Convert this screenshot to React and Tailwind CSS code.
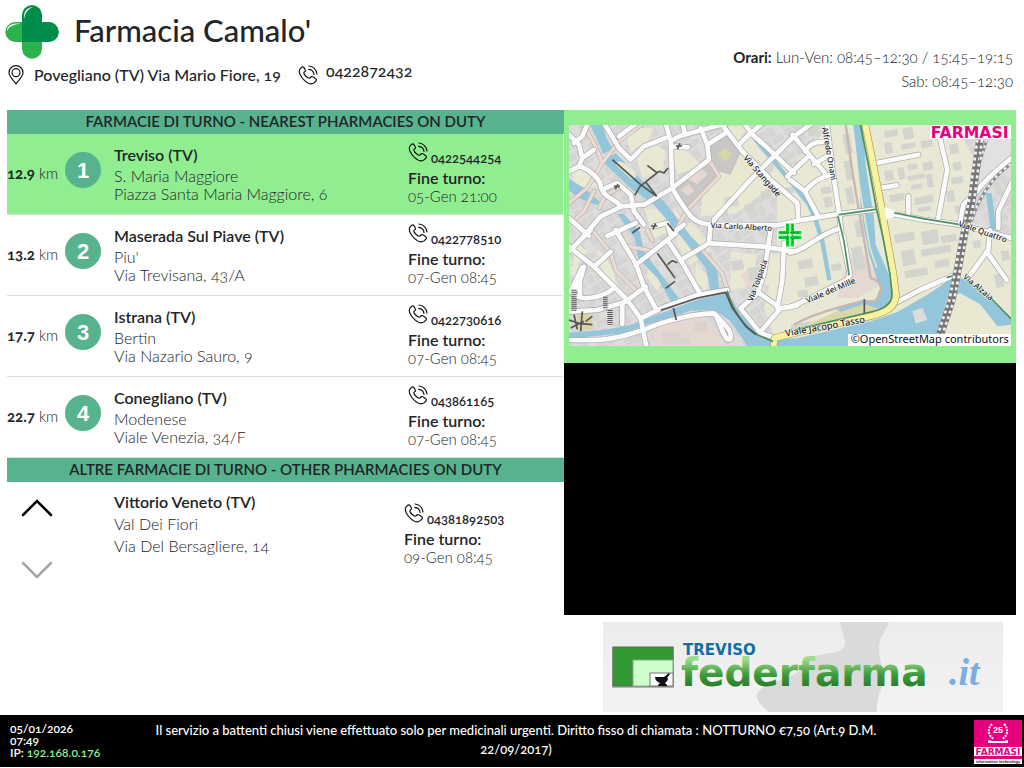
const pharmacies = [
  { id: 1, km: "12.9", city: "Treviso (TV)", name: "S. Maria Maggiore", street: "Piazza Santa Maria Maggiore, 6", phone: "0422544254", end: "05-Gen 21:00" },
  { id: 2, km: "13.2", city: "Maserada Sul Piave (TV)", name: "Piu'", street: "Via Trevisana, 43/A", phone: "0422778510", end: "07-Gen 08:45" },
  { id: 3, km: "17.7", city: "Istrana (TV)", name: "Bertin", street: "Via Nazario Sauro, 9", phone: "0422730616", end: "07-Gen 08:45" },
  { id: 4, km: "22.7", city: "Conegliano (TV)", name: "Modenese", street: "Viale Venezia, 34/F", phone: "043861165", end: "07-Gen 08:45" },
];

const PhoneIcon = () => (
  <svg viewBox="0 0 60 60" className="size-5 shrink-0" fill="none" stroke="#111" strokeWidth="3.5" strokeLinecap="round" strokeLinejoin="round" aria-hidden="true">
    <path d="M10 8 L6 12 C-1 22 11 39 20 47 C30 56 41 60 49 53 L54 48 C56 45 56 43 53 41 L46 36 C42 33 39 35 36 39 C33 41 28 38 23 33 C18 28 16 24 19 21 C23 19 24 17 21 13 L18 8 C16 5 13 5 10 8Z" />
    <path d="M33 3 C46 5 55 14 57 27 M32 13 C41 14 47 19 48 28" />
  </svg>
);

const PinIcon = () => (
  <svg viewBox="0 0 48 60" className="h-5 w-4 shrink-0" fill="none" stroke="#111" strokeWidth="3.5" aria-hidden="true">
    <path d="M24 57 C20 50 3 34 3 23 A21 21 0 0 1 45 23 C45 34 28 50 24 57Z" strokeLinejoin="round" />
    <circle cx="24" cy="23" r="12" />
  </svg>
);

const CrossLogo = () => (
  <svg viewBox="0 0 162 162" className="size-[54px] shrink-0" aria-hidden="true">
    <rect x="51" y="1" width="60" height="160" rx="30" fill="#2bb24c" />
    <rect x="1" y="51" width="160" height="60" rx="30" fill="#2bb24c" />
    <path d="M51 111 V31 A30 30 0 0 1 111 31 V51 H131 A30 30 0 0 1 131 111Z" fill="#008c4a" />
    <path d="M57 42 C55 20 66 7 84 6 C70 12 62 20 57 42Z M6 78 C6 62 20 54 46 56 C28 58 14 62 6 78Z" fill="#fff" opacity=".9" />
  </svg>
);

const whiteRoads = [
  "M72 45 L55 85 L30 105 M15 80 L45 110 L55 150 L45 175 M55 150 L90 125",
  "M15 190 L45 175 C80 185 110 215 112 240 C120 270 160 275 170 295 L240 290 L325 240",
  "M60 384 L110 325 L170 297 M120 45 L165 120 L200 155 L240 115 L305 90 M165 85 L225 40",
  "M305 45 L320 100 L325 240 M320 100 L345 85 L490 45 M355 45 L363 78 M325 115 L372 118",
  "M410 60 L430 110 L435 155 L325 240 M430 110 L485 75",
  "M325 240 C345 280 370 310 380 325 C400 345 430 350 450 350 L640 352 L708 337 L823 318 L948 303",
  "M450 350 L450 335 L560 215 L625 150 L690 85 L745 45",
  "M470 45 L535 130 L620 215 L700 285 L703 335 M525 110 L560 75 L600 110 L690 195 M540 45 L562 75 L595 45",
  "M685 80 L783 195 M670 205 L728 150 M723 130 C738 105 758 100 780 102 M750 168 L790 145",
  "M678 215 L723 250 L763 325 M723 250 C748 220 778 205 800 200 M788 45 L808 200 L826 320 L833 384 L858 500",
  "M678 598 L738 571 L848 516 L858 500 L838 386 M678 434 C720 430 760 380 830 360",
  "M968 315 L1078 335 L1188 350 L1350 392",
  "M938 165 L1063 140 M948 240 L998 232 M1033 265 L1033 315 M1123 70 L1150 185 L1123 330",
  "M1188 345 L1198 290 L1238 250 C1258 220 1318 170 1345 148 M1345 220 L1303 310 L1303 360",
  "M1278 366 L1273 426 L1218 501 M1268 431 L1328 516 M1000 582 L1068 546 L1165 504",
  "M80 366 L15 430 M15 416 L90 476 L190 576 L230 631 L248 720 M90 476 L140 431",
  "M60 476 L45 530 L25 556 C50 581 110 571 150 541 M20 550 L55 478 M48 490 L48 565",
  "M15 611 L100 606 L185 581 L245 536 M175 586 L175 648",
  "M115 245 L160 225 L200 260 L210 310 L240 350 M155 366 L215 466 L240 536 L275 601 M215 471 L335 376 M310 396 L350 456 L405 551",
  "M350 456 L435 406 L440 350 M440 406 L600 416 L690 431",
  "M230 631 L290 601 L400 561 L490 546",
  "M20 696 C150 701 180 681 240 666 C300 636 400 616 450 616 C480 646 505 670 500 691 C492 700 485 690 478 675 L455 620",
  "M620 366 L600 496 L580 556 L530 601 L590 676 L640 691 M580 551 L650 601 L590 671 M660 406 L655 516 L640 601 M650 601 L700 592",
  "M130 384 L170 366 L215 345 M15 330 L75 384 M270 355 L310 345 L320 380 L360 350",
];

const pinkRoads = [
  "M55 45 L95 115 L115 165 L70 240 L15 285",
  "M240 45 L165 100 L115 165 M15 350 L60 310 L90 250",
  "M435 155 L465 205 L370 305 L325 384 L270 430 L190 414 M250 366 L265 398",
  "M105 300 L125 262 L160 242",
  "M85 366 L140 436 L155 486 L215 546",
  "M415 426 L475 496 L490 546",
];

const parcels = [
  "M180 60 h90 l-20 40 -50 30z", "M215 140 l60 -30 30 20 -10 60 -60 20z", "M25 180 l40 10 30 40 -60 40z",
  "M490 55 h60 l-30 50z", "M560 90 l50 60 -40 50 -50 -80z", "M420 215 l120 -80 90 90 -110 90 -110 10z",
  "M640 160 l70 60 40 60 -60 0 -80 -60z", "M330 300 l30 40 40 20 40 70 -60 40 -40 -60z", "M240 300 l60 10 20 60 -50 20z",
  "M500 430 l80 10 -20 90 -60 20z", "M30 400 l40 30 -40 60z", "M610 440 l40 0 -10 110 -50 -30z", "M15 480 l30 -20 -10 60z",
  "M260 450 l40 60 -20 40 -30 -40z", "M100 420 l40 50 20 60 -40 -30z", "M395 460 l40 50 -10 40 -30 -30z", "M310 100 l60 30 40 40 -70 30z",
];

const houses = [
  [960, 70, 40, 20], [1015, 62, 30, 34], [960, 105, 22, 34], [1010, 110, 44, 16], [1070, 100, 34, 22], [1075, 165, 30, 24],
  [960, 190, 26, 30], [1000, 180, 18, 36], [1030, 170, 28, 18], [1030, 205, 52, 14], [1085, 200, 18, 40], [1040, 232, 34, 14],
  [1155, 110, 26, 30], [1165, 165, 24, 24], [1160, 210, 36, 20], [1145, 250, 24, 34], [1170, 295, 22, 22], [975, 262, 44, 22],
  [1050, 270, 56, 22], [1060, 300, 40, 14], [990, 380, 60, 26], [1070, 372, 50, 40], [1130, 385, 46, 22], [1010, 430, 40, 46],
  [1070, 425, 90, 22], [1020, 490, 70, 22], [1110, 460, 44, 22], [835, 80, 22, 60], [838, 160, 20, 60], [842, 240, 22, 50],
  [770, 240, 30, 20], [778, 270, 24, 30], [700, 120, 30, 20], [730, 60, 34, 26], [690, 160, 22, 22], [860, 420, 34, 70],
  [870, 340, 36, 50], [800, 470, 30, 20], [700, 460, 44, 26], [720, 510, 40, 28], [700, 550, 30, 20], [1290, 500, 24, 40],
  [1310, 430, 24, 30], [1225, 400, 24, 22], [1290, 230, 20, 30], [660, 240, 30, 20], [480, 270, 40, 30], [540, 290, 30, 26],
  [460, 310, 30, 20], [590, 250, 30, 26], [500, 460, 36, 30], [550, 480, 30, 40], [680, 650, 60, 20], [1115, 605, 26, 16],
];

const labels = [
  { text: "Via Stangade", x: 542, y: 146, turn: 49, size: 25 },
  { text: "Via Carlo Alberto", x: 440, y: 353, turn: 3, size: 23 },
  { text: "Alfredo Oriani", x: 780, y: 58, turn: 80, size: 24 },
  { text: "Viale Quattro", x: 1184, y: 348, turn: 19, size: 24 },
  { text: "Via Tolpada", x: 560, y: 580, turn: -70, size: 24 },
  { text: "Viale dei Mille", x: 728, y: 580, turn: -23, size: 24 },
  { text: "Viale Jacopo Tasso", x: 664, y: 678, turn: -10, size: 28 },
  { text: "Via Alzaia", x: 1200, y: 504, turn: 40, size: 24 },
];

const CityMap = () => (
  <svg viewBox="15 51 1326 663" className="block w-full" role="img" aria-label="Mappa della farmacia" fontFamily="'Noto Sans', sans-serif">
    <defs>
      <pattern id="blocks" width="74" height="62" patternUnits="userSpaceOnUse" patternTransform="rotate(-32)">
        <rect width="74" height="62" fill="#dedddc" />
        <path d="M4 6 h24 v18 h-24z M34 4 h18 v28 h-18z M6 32 h20 v24 h-20z M34 40 h34 v16 h-34z" fill="#d6d5d4" stroke="#cdcccb" strokeWidth="1" />
      </pattern>
    </defs>
    <rect x="15" y="51" width="1326" height="663" fill="url(#blocks)" />
    <g fill="#e9e9d3">
      {parcels.map((d) => <path key={d} d={d} />)}
      <path d="M640 220 L800 51 H1180 L1240 180 L1210 340 L1341 380 V714 H640 L600 600 L640 440Z" fill="#e8e8d4" />
    </g>
    <path d="M1255 51 H1341 V150 L1210 290 L1225 150Z" fill="#e1e1e1" />
    <path d="M425 110 L485 75 L530 135 L500 200 L460 190 L438 155Z M325 245 L430 165 L460 205 L370 300Z" fill="#c8c7c6" />
    <path d="M460 140 l22 -20 22 18 -18 24z" fill="#d6d6a6" />
    <path d="M365 210 l45 -30 20 18 -30 30z M350 245 l24 -16 16 20 -20 16z M270 650 L420 625 L470 690 L480 714 H270Z M530 500 l30 -20 20 40 -30 20z M850 450 L905 440 L950 530 L880 570 L820 570Z" fill="#e5d8d1" />
    <path d="M290 670 h60 v20 h30 v20 h-80z M390 640 h40 v30 h-40z" fill="#dcd2ce" />
    <path d="M690 670 L860 590 L960 580 L970 605Z" fill="#d9d7a8" />
    <path d="M40 615 h45 v50 h-45z" fill="#d9d3a5" />
    <g fill="#d4d4cf">
      {houses.map(([x, y, w, h]) => <rect key={x + "-" + y} x={x} y={y} width={w} height={h} transform={`rotate(-10 ${x} ${y})`} />)}
    </g>

    <g fill="#93c6da">
      <path d="M78 51 H115 L128 90 L145 122 L118 138 L95 85Z M115 160 L155 135 L250 235 L300 280 L380 384 L425 430 L460 490 L466 548 H440 L425 480 L350 384 L265 285 L205 245Z" />
      <path d="M15 212 L60 240 L108 282 L98 292 L50 272 L15 248Z M160 318 L180 318 L228 372 L240 430 L300 510 L345 572 L325 585 L280 510 L222 450 L212 390Z" />
      <path d="M15 674 C110 668 190 660 235 637 L400 575 L490 555 L530 620 L590 672 L640 695 L700 690 L920 640 L1000 612 L1090 560 L1165 510 L1210 512 L1341 630 V650 L1300 655 L1250 590 L1190 556 L1150 570 L1125 650 L1130 690 L1060 714 H550 L500 640 L450 605 L380 608 L245 650 L180 675 L15 692Z" />
      <path d="M868 51 H896 L905 170 L930 330 L935 410 L975 500 L982 560 L960 605 L930 590 L948 540 L915 440 L890 300 L885 200Z" />
      <path d="M815 600 L900 574 L958 592 L950 604 L900 588 L830 612Z M1265 255 L1283 255 L1296 365 H1280Z" />
    </g>
    <path d="M575 95 L690 232 L735 290 L758 345 L775 400 L796 516" fill="none" stroke="#93c6da" strokeWidth="13" />
    <path d="M1045 610 l30 -10 15 35 -35 12z" fill="#dcdcda" />
    <path d="M155 170 C160 155 175 155 215 195 C218 208 212 216 200 212Z" fill="#e7e8cd" />
    <path d="M1130 714 C1120 650 1145 590 1160 572 C1190 550 1240 590 1300 714Z" fill="#e9e8d0" />
    <path d="M880 190 L900 320 L918 420 L938 480" fill="none" stroke="#e6e6cf" strokeWidth="5" />
    <path d="M845 51 L862 170 L880 280 L920 510 C960 520 960 560 930 580 C900 575 760 610 690 650" fill="none" stroke="#c7b6b2" strokeWidth="7" />

    <g fill="none" strokeLinejoin="round" strokeLinecap="round">
      {pinkRoads.map((d) => <path key={d} d={d} stroke="#b9a9a2" strokeWidth="13" />)}
      {pinkRoads.map((d) => <path key={d} d={d} stroke="#e9dcd5" strokeWidth="10" />)}
      {whiteRoads.map((d) => <path key={d} d={d} stroke="#a8a8a8" strokeWidth="18" />)}
      {whiteRoads.map((d) => <path key={d} d={d} stroke="#fbfbfb" strokeWidth="14" />)}
      <path d="M903 45 L928 170 L953 300 L965 370 L988 496 L996 560 C996 600 960 615 918 625 L680 678 L632 690 L628 720" stroke="#a9a04f" strokeWidth="22" />
      <path d="M903 45 L928 170 L953 300 L965 370 L988 496 L996 560 C996 600 960 615 918 625 L680 678 L632 690 L628 720" stroke="#f8f19f" strokeWidth="18" />
      <path d="M966 302 L990 312 L985 325 L970 330Z" fill="#fbfbfb" stroke="#fbfbfb" strokeWidth="8" />
      <path d="M888 45 L915 180 L937 300 L955 380 L978 500 L984 560 C980 595 950 605 920 612 L700 664 M992 315 L1078 332 L1188 350 M826 320 L935 304 M822 325 L840 400 L855 500 M490 550 C505 600 530 650 580 680 L625 700 M1150 508 L1180 500 M1280 570 L1341 632" stroke="#4c9160" strokeWidth="5" />
    </g>
    <g fill="none" stroke="#555" strokeWidth="5" strokeLinejoin="round">
      <path d="M145 155 L230 230 L278 265 M212 262 L228 235 L285 190 L300 195 L312 180 M250 172 L280 195 M245 222 L278 265" />
      <path d="M280 436 L333 510 M305 541 L333 520 M310 470 L325 458 L340 464 M328 600 L337 636 M310 345 L330 370 M205 375 L228 358" />
      <path d="M290 607 L400 570 L485 553 L505 600 L545 655 L575 680 M901 574 V615 M336 114 h18 M348 106 l-8 18 M150 235 h18 M162 228 l-8 16 M262 354 h18 M275 346 l-8 18" />
      <path d="M15 636 L45 646 L85 650 M20 660 L60 640 M30 620 L40 664 M55 610 L50 670 M65 640 L85 625" />
      <path d="M30 545 V610 M138 606 V650" strokeWidth="16" strokeDasharray="3 3" />
      <path d="M124 566 V604" strokeWidth="14" strokeDasharray="3 3" />
    </g>
    <g fill="none">
      <path d="M1248 95 L1223 280 L1203 366 L1183 476 L1163 576 L1128 681" stroke="#777" strokeWidth="24" />
      <path d="M1240 95 L1215 280 L1196 366 L1176 476 L1156 576 L1121 681 M1254 95 L1230 280 L1210 366 L1190 476 L1170 576 L1135 681" stroke="#f2f2f2" strokeWidth="8" strokeDasharray="9 9" />
      <path d="M1341 168 C1280 210 1240 280 1222 340 M1268 95 L1248 160" stroke="#888" strokeWidth="9" />
      <path d="M1341 168 C1280 210 1240 280 1222 340 M1268 95 L1248 160" stroke="#f2f2f2" strokeWidth="6" strokeDasharray="9 9" />
    </g>

    <g fill="#222" stroke="#fff" strokeWidth="4" strokeOpacity=".75" paintOrder="stroke">
      {labels.map((label) => (
        <text key={label.text} x={label.x} y={label.y} fontSize={label.size} fontWeight="500" dominantBaseline="middle" transform={`rotate(${label.turn} ${label.x} ${label.y})`}>
          {label.text}
        </text>
      ))}
    </g>

    <g>
      <path d="M664 345 h28 v22 h22 v28 h-22 v22 h-28 v-22 h-22 v-28 h22z" fill="#17d23a" stroke="#fff" strokeWidth="3" />
      <path d="M678 346 V416 M643 381 H713" stroke="#d8ffd8" strokeWidth="4" />
      <path d="M670 350 v58 M686 350 v58 M648 374 h60 M648 389 h60" stroke="#0a9a26" strokeWidth="3" strokeDasharray="6 4" />
    </g>

    <rect x="1098" y="51" width="243" height="42" fill="#fff" fillOpacity=".85" />
    <text x="1100" y="89" fontFamily="'DejaVu Sans', sans-serif" fontWeight="700" fontSize="47" fill="#e6007e">FARMASI</text>
    <rect x="852" y="678" width="489" height="36" fill="#fff" />
    <text x="860" y="706" fontSize="33" fill="#111">©OpenStreetMap contributors</text>
  </svg>
);

const FederfarmaBanner = () => (
  <svg viewBox="0 0 400 90" className="block w-[400px] max-w-full" role="img" aria-label="Treviso federfarma.it">
    <defs>
      <linearGradient id="paper" x1="0" y1="0" x2="0" y2="1">
        <stop offset="0" stopColor="#ececec" />
        <stop offset="1" stopColor="#f3f3f3" />
      </linearGradient>
      <linearGradient id="leaf" x1="0" y1="0" x2="0" y2="1">
        <stop offset=".2" stopColor="#9fdc8f" />
        <stop offset=".55" stopColor="#3d9a3a" />
        <stop offset="1" stopColor="#1f6a24" />
      </linearGradient>
    </defs>
    <rect width="400" height="90" fill="url(#paper)" />
    <path d="M237 0 H286 C284 8 276 14 276 26 C276 42 284 52 280 62 C276 72 273 80 274 90 H167 C156 84 152 76 155 70 C165 58 180 60 195 50 C208 40 205 34 222 32 C244 30 245 22 239 10Z" fill="#dadada" />
    <rect x="9" y="25" width="62" height="41" fill="#777" opacity=".5" />
    <rect x="10" y="25" width="60" height="39" fill="#339933" stroke="#5b6b5b" />
    <rect x="30" y="38" width="40" height="26" fill="#ccffcc" stroke="#8aa88a" />
    <rect x="47" y="51" width="23" height="13" fill="#fff" stroke="#777" />
    <path d="M52 55 h9 l5 -4 1 1 -3 4 h1 c0 3 -2 4 -3 5 l2 2 v1 h-9 v-1 l2 -2 c-3 -1 -5 -3 -5 -6z" fill="#111" />
    <text x="80" y="33" fontFamily="'DejaVu Sans', sans-serif" fontWeight="700" fontSize="15" fill="#126fa3">TREVISO</text>
    <text x="78" y="64" fontFamily="'DejaVu Sans', sans-serif" fontWeight="700" fontSize="39" fill="url(#leaf)">federfarma</text>
    <text x="346" y="63" fontFamily="'Liberation Serif', serif" fontWeight="700" fontStyle="italic" fontSize="38" fill="#79aee0">.it</text>
  </svg>
);

const FarmasiLogo = () => (
  <svg viewBox="0 0 48 44" className="block w-12 shrink-0" role="img" aria-label="Farmasi information technology">
    <rect width="48" height="44" fill="#fff" />
    <rect width="48" height="27" fill="#e6007e" />
    <rect y="36" width="48" height="3" fill="#e6007e" />
    <path d="M18 4 C13 9 14 16 20 19 M30 4 C35 9 34 16 28 19" fill="none" stroke="#fff" strokeWidth="2" strokeDasharray="2 1" />
    <path d="M14 20 L18 21 H30 L34 20 V23 H14Z" fill="#fff" />
    <text x="24" y="13" textAnchor="middle" fontFamily="'Liberation Sans', sans-serif" fontSize="9" fill="#fff">25</text>
    <text x="24" y="35" textAnchor="middle" fontFamily="'DejaVu Sans', sans-serif" fontWeight="700" fontSize="9" fill="#e6007e">FARMASI</text>
    <text x="24" y="43" textAnchor="middle" fontFamily="'Liberation Sans', sans-serif" fontSize="4" fill="#222">information technology</text>
  </svg>
);

const SectionTitle = ({ children }) => (
  <h2 className="h-6 bg-[#56b38d] text-center text-[15px] leading-[22px] font-semibold">{children}</h2>
);

const Contact = ({ phone, end }) => (
  <div className="pt-2">
    <p className="flex h-[27px]">
      <PhoneIcon />
      <span className="ml-[3px] pt-[7px] text-[13px] leading-[18px] font-semibold">{phone}</span>
    </p>
    <p className="text-base leading-[18px] font-semibold">Fine turno:</p>
    <p className="text-[15px] leading-[18px] font-light">{end}</p>
  </div>
);

const PharmacyRow = ({ item, nearest }) => (
  <li className={`mr-px grid h-[81px] grid-cols-[58px_49px_294px_1fr] border-b border-[#ddd] ${nearest ? "bg-[#90ee90]" : ""}`}>
    <p className="self-center pb-px text-[15px] font-light whitespace-nowrap">
      <b className="font-bold">{item.km}</b> km
    </p>
    <span className="mt-[18px] flex size-9 items-center justify-center rounded-full bg-[#56b38d] font-['Liberation_Sans',sans-serif] text-[22px] font-bold text-white">
      {item.id}
    </span>
    <div className="pt-3 text-base leading-[18px] font-light">
      <h3 className="mb-[3px] font-semibold">{item.city}</h3>
      <p>{item.name}</p>
      <p>{item.street}</p>
    </div>
    <Contact phone={item.phone} end={item.end} />
  </li>
);

const App = () => (
  <div className="flex min-h-screen flex-col bg-white font-[Lato,'Open_Sans',sans-serif] text-[#212529] oldstyle-nums">
    <header className="flex h-[110px] justify-between pr-[11px] pl-[5px]">
      <div>
        <div className="flex items-center gap-[15px] pt-[5px]">
          <CrossLogo />
          <h1 className="pb-[3px] text-[31px] font-medium">Farmacia Camalo'</h1>
        </div>
        <div className="flex gap-[10px] pt-[6px] pl-[3px] text-base leading-5 font-medium">
          <PinIcon />
          <p className="w-[254px]">Povegliano (TV) Via Mario Fiore, 19</p>
          <PhoneIcon />
          <p className="-mt-1 -ml-[2px]">0422872432</p>
        </div>
      </div>
      <div className="pt-[45px] text-right text-[15px] leading-6 font-light">
        <p><b className="font-bold">Orari:</b> Lun-Ven: 08:45–12:30 / 15:45–19:15</p>
        <p>Sab: 08:45–12:30</p>
      </div>
    </header>

    <main className="grid grow grid-cols-[557fr_452fr] pr-2 pl-[7px]">
      <section>
        <SectionTitle>FARMACIE DI TURNO - NEAREST PHARMACIES ON DUTY</SectionTitle>
        <ul>
          {pharmacies.map((item, i) => <PharmacyRow key={item.id} item={item} nearest={i === 0} />)}
        </ul>
        <SectionTitle>ALTRE FARMACIE DI TURNO - OTHER PHARMACIES ON DUTY</SectionTitle>
        <div className="grid grid-cols-[107px_290px_1fr]">
          <div className="flex flex-col gap-11 pt-[17px] pl-[13px]">
            <button type="button" aria-label="Precedente">
              <svg viewBox="0 0 34 18" className="w-[34px]" fill="none" stroke="#000" strokeWidth="2.5" strokeLinecap="round"><path d="M3 16 L17 2 L31 16" /></svg>
            </button>
            <button type="button" aria-label="Successiva">
              <svg viewBox="0 0 34 18" className="w-[34px]" fill="none" stroke="#a6a6a6" strokeWidth="2.5" strokeLinecap="round"><path d="M3 2 L17 16 L31 2" /></svg>
            </button>
          </div>
          <div className="pt-[9px] text-base leading-[22px] font-light">
            <h3 className="font-semibold">Vittorio Veneto (TV)</h3>
            <p>Val Dei Fiori</p>
            <p>Via Del Bersagliere, 14</p>
          </div>
          <div className="pt-[13px]">
            <Contact phone="04381892503" end="09-Gen 08:45" />
          </div>
        </div>
      </section>

      <aside>
        <div className="bg-[#90ee90] px-[5px] pt-[15px] pb-[17px]">
          <CityMap />
        </div>
        <div className="h-[252px] bg-black" />
        <div className="flex justify-end pt-[7px] pr-[13px] pb-[3px]">
          <FederfarmaBanner />
        </div>
      </aside>
    </main>

    <footer className="mb-px flex h-[52px] shrink-0 justify-between bg-black pr-[2px] pl-[10px] font-semibold text-white">
      <div className="w-[120px] pt-2 text-[12px] leading-3">
        <p>05/01/2026</p>
        <p>07:49</p>
        <p>IP: <span className="text-[#90ee90]">192.168.0.176</span></p>
      </div>
      <p className="max-w-[740px] grow pt-[6px] text-center text-[13px] leading-[19px] font-medium">
        Il servizio a battenti chiusi viene effettuato solo per medicinali urgenti. Diritto fisso di chiamata : NOTTURNO €7,50 (Art.9 D.M. 22/09/2017)
      </p>
      <div className="flex w-[120px] justify-end pt-[2px]">
        <FarmasiLogo />
      </div>
    </footer>
  </div>
);

export default App;
